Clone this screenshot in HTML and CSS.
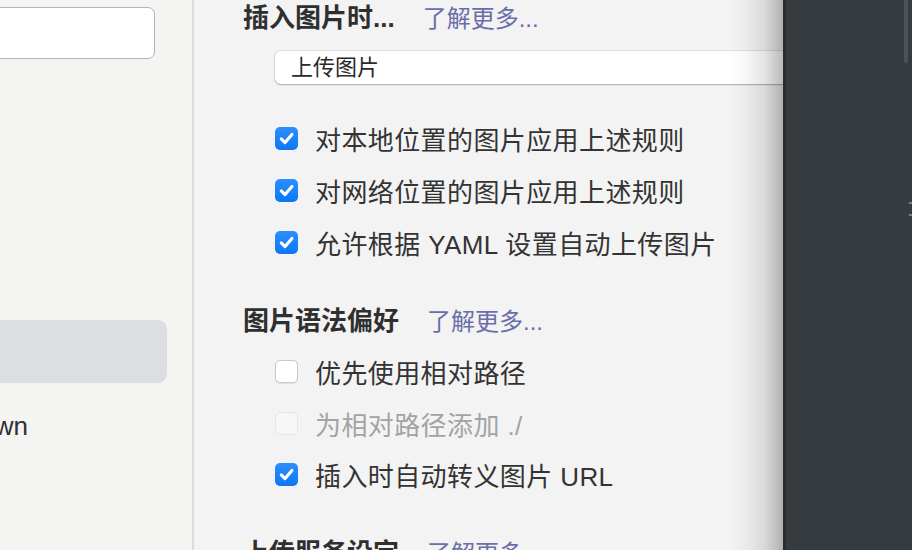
FILE: index.html
```html
<!DOCTYPE html>
<html lang="zh-CN">
<head>
<meta charset="utf-8">
<title>偏好设置 - 图像</title>
<link rel="stylesheet" href="styles.css">
</head>
<body>
<div class="window">
  <aside class="sidebar">
    <div class="search"></div>
    <div class="nav-item selected"></div>
    <div class="nav-label">Markdown</div>
  </aside>

  <main class="settings">
    <div class="section-head">
      <h2 class="title">插入图片时...</h2>
      <a class="more">了解更多...</a>
    </div>
    <div class="select">上传图片</div>

    <ul class="options first">
      <li class="option"><span class="box checked"><svg viewBox="0 0 22 22"><path d="M6 11.3l3.6 3.6 6.6-7.8"/></svg></span><span>对本地位置的图片应用上述规则</span></li>
      <li class="option"><span class="box checked"><svg viewBox="0 0 22 22"><path d="M6 11.3l3.6 3.6 6.6-7.8"/></svg></span><span>对网络位置的图片应用上述规则</span></li>
      <li class="option"><span class="box checked"><svg viewBox="0 0 22 22"><path d="M6 11.3l3.6 3.6 6.6-7.8"/></svg></span><span>允许根据 YAML 设置自动上传图片</span></li>
    </ul>

    <div class="section-head second">
      <h2 class="title">图片语法偏好</h2>
      <a class="more">了解更多...</a>
    </div>
    <ul class="options tight">
      <li class="option"><span class="box"></span><span>优先使用相对路径</span></li>
      <li class="option disabled"><span class="box"></span><span>为相对路径添加 ./</span></li>
      <li class="option"><span class="box checked"><svg viewBox="0 0 22 22"><path d="M6 11.3l3.6 3.6 6.6-7.8"/></svg></span><span>插入时自动转义图片 URL</span></li>
    </ul>

    <div class="section-head third">
      <h2 class="title">上传服务设定</h2>
      <a class="more">了解更多...</a>
    </div>
  </main>

  <section class="editor">
    <div class="scrollbar"></div>
    <div class="tick t1"></div>
    <div class="tick t2"></div>
  </section>
</div>
</body>
</html>
```

FILE: styles.css
```css
* { box-sizing: border-box; }

html, body {
  margin: 0;
  padding: 0;
  width: 912px;
  height: 550px;
  overflow: hidden;
}

body {
  font-family: "Liberation Sans", "Noto Sans CJK SC", sans-serif;
  color: #333333;
  background: #f3f3f3;
}

.window {
  display: flex;
  width: 912px;
  height: 550px;
}

/* ---------- sidebar ---------- */
.sidebar {
  width: 194px;
  flex: none;
  background: #f4f4f3;
  border-right: 2px solid #dcdcdc;
  overflow: hidden;
  display: flex;
  flex-direction: column;
  align-items: flex-start;
}

.search {
  margin-top: 7px;
  margin-left: -20px;
  width: 175px;
  height: 52px;
  background: #ffffff;
  border: 1.5px solid #b3b3b3;
  border-radius: 7px;
}

.nav-item.selected {
  margin-top: 261px;
  margin-left: -20px;
  width: 187px;
  height: 63px;
  background: #dcdfe2;
  border-radius: 9px;
}

.nav-label {
  margin-top: 25px;
  margin-left: -92px;
  font-size: 26px;
  line-height: 36px;
  white-space: nowrap;
  color: #303030;
}

/* ---------- settings ---------- */
.settings {
  flex: 1;
  min-width: 0;
  position: relative;
  overflow: hidden;
  background: #f3f3f3;
  padding-left: 49px;
}

.settings::after {
  content: "";
  position: absolute;
  top: 0;
  right: 0;
  bottom: 0;
  width: 52px;
  background: linear-gradient(to right,
    rgba(0,0,0,0) 0%,
    rgba(0,0,0,0.035) 30%,
    rgba(0,0,0,0.11) 65%,
    rgba(0,0,0,0.27) 100%);
  pointer-events: none;
}

.section-head {
  display: flex;
  align-items: baseline;
  gap: 28px;
  height: 36px;
  line-height: 36px;
  white-space: nowrap;
}

.section-head.second { margin-top: 35px; }
.section-head.third { margin-top: 34px; }

.title {
  margin: 0;
  font-size: 26px;
  font-weight: bold;
  color: #2f2f2f;
}

.more {
  font-size: 24px;
  color: #6a6ea9;
  text-decoration: none;
}

.select {
  margin-top: 15px;
  margin-left: 32px;
  width: 620px;
  height: 33px;
  line-height: 33px;
  padding-left: 16px;
  font-size: 22px;
  color: #2a2a2a;
  background: #ffffff;
  border-radius: 6px;
  box-shadow: 0 0 0 1px rgba(0,0,0,0.07), 0 1px 1.5px rgba(0,0,0,0.25);
}

.options {
  list-style: none;
  margin: 7px 0 0 32px;
  padding: 0;
}

.options.first { margin-top: 28px; }

.option {
  display: flex;
  align-items: center;
  gap: 17px;
  height: 52px;
  font-size: 26px;
  letter-spacing: 0.4px;
  color: #333333;
  white-space: nowrap;
}

.options.tight .option { height: 51.5px; }

.box {
  width: 23px;
  height: 23px;
  flex: none;
  border-radius: 5px;
  background: #ffffff;
  border: 1px solid #c9c9c9;
  box-shadow: 0 0.5px 1px rgba(0,0,0,0.08);
  display: flex;
  align-items: center;
  justify-content: center;
}

.box.checked {
  border: none;
  background: linear-gradient(#2d8eff, #0b77f7);
  box-shadow: none;
}

.box svg {
  width: 23px;
  height: 23px;
}

.box svg path {
  fill: none;
  stroke: #ffffff;
  stroke-width: 3;
  stroke-linecap: round;
  stroke-linejoin: round;
}

.option.disabled { color: #a3a3a3; }
.option.disabled .box {
  background: #f6f6f6;
  border-color: #e6e6e6;
  box-shadow: none;
}

/* ---------- editor (dark) ---------- */
.editor {
  width: 129px;
  flex: none;
  position: relative;
  background: #363b40;
  border-left: 3px solid #2a2c2e;
}

.scrollbar {
  position: absolute;
  top: 0;
  right: 4px;
  width: 4px;
  height: 63px;
  background: #4c525a;
  border-radius: 0 0 2px 2px;
}

.tick {
  position: absolute;
  right: 0;
  width: 3px;
  height: 2px;
  background: #7a7f85;
}
.tick.t1 { top: 202px; }
.tick.t2 { top: 214px; }
```
